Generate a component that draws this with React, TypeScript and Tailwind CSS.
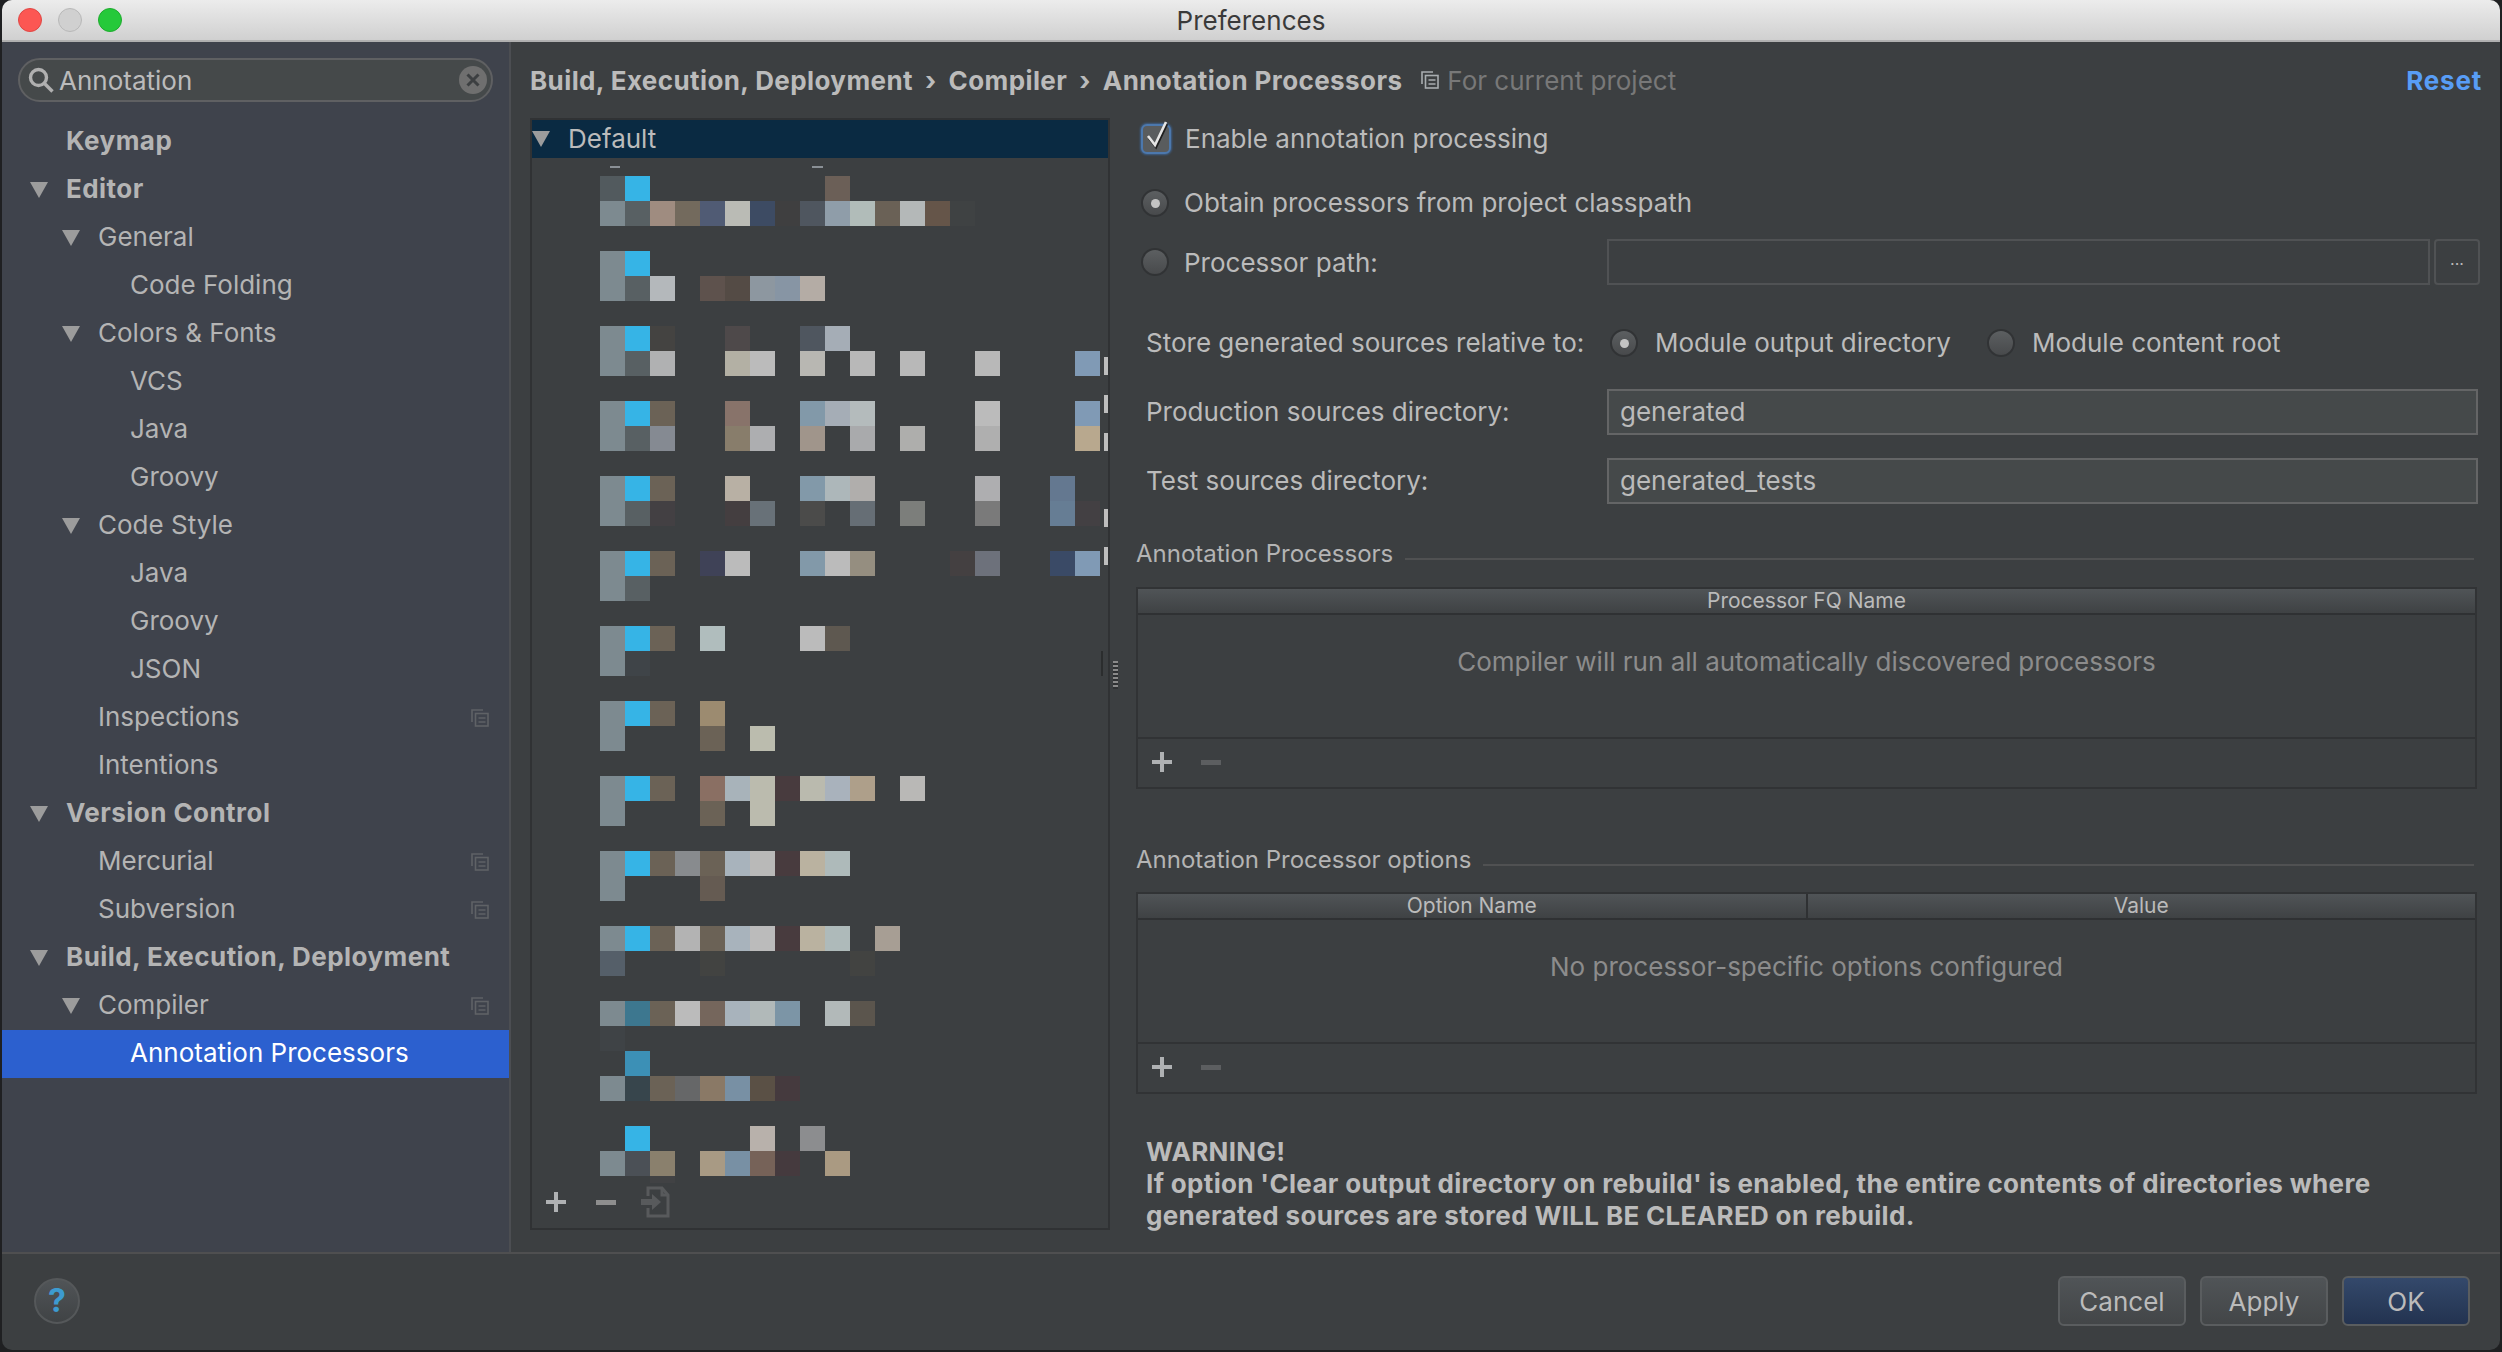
import React from "react";

const TREE = [
  { label: "Keymap", level: 0, bold: true },
  { label: "Editor", level: 0, bold: true, open: true },
  { label: "General", level: 1, open: true },
  { label: "Code Folding", level: 2 },
  { label: "Colors & Fonts", level: 1, open: true },
  { label: "VCS", level: 2 },
  { label: "Java", level: 2 },
  { label: "Groovy", level: 2 },
  { label: "Code Style", level: 1, open: true },
  { label: "Java", level: 2 },
  { label: "Groovy", level: 2 },
  { label: "JSON", level: 2 },
  { label: "Inspections", level: 1, copy: true },
  { label: "Intentions", level: 1 },
  { label: "Version Control", level: 0, bold: true, open: true },
  { label: "Mercurial", level: 1, copy: true },
  { label: "Subversion", level: 1, copy: true },
  { label: "Build, Execution, Deployment", level: 0, bold: true, open: true },
  { label: "Compiler", level: 1, open: true, copy: true },
  { label: "Annotation Processors", level: 2, selected: true },
];

const B = "#36b4e6";
const G = "#7d8a90";
const S = "#586063";
const M = "#6b6256";

// blurred-out module list: [row, column, colour]
const groups: [number, [number, string][], [number, string][]][] = [
  [0, [[0, "#525a5e"], [1, B], [9, "#6b5f57"]], [[0, G], [1, S], [2, "#9f8c80"], [3, "#736a5d"], [4, "#505b74"], [5, "#babbb5"], [6, "#3d4b63"], [7, "#3f3f40"], [8, "#4f565f"], [9, "#8f9da9"], [10, "#b1bcb9"], [11, "#6a6156"], [12, "#b4b8b8"], [13, "#655549"], [14, "#3f4243"]]],
  [3, [[0, G], [1, B]], [[0, G], [1, S], [2, "#b4b8bb"], [4, "#5e524d"], [5, "#544b45"], [6, "#8d97a0"], [7, "#8795a4"], [8, "#b4aca5"]]],
  [6, [[0, G], [1, B], [2, "#444341"], [5, "#4e494a"], [8, "#4f565f"], [9, "#a5adb6"]], [[0, G], [1, S], [2, "#b0b1b2"], [5, "#b3b0a4"], [6, "#bbbbbb"], [8, "#b8b7b2"], [10, "#b8b8b8"], [12, "#b8b8b8"], [15, "#b8b8b8"], [19, "#809ab5"]]],
  [9, [[0, G], [1, B], [2, M], [5, "#88736a"], [8, "#8299a9"], [9, "#a5adb6"], [10, "#b4bbbc"], [15, "#bbbbbb"], [19, "#809ab5"]], [[0, G], [1, S], [2, "#858a92"], [5, "#887d6b"], [6, "#adaeb0"], [8, "#a0958b"], [10, "#a9aaac"], [12, "#aeaeac"], [15, "#afafaf"], [19, "#b8a88e"]]],
  [12, [[0, G], [1, B], [2, M], [5, "#b8b0a4"], [8, "#8299a9"], [9, "#adb7ba"], [10, "#b0aeac"], [15, "#aeaeb0"], [18, "#647890"]], [[0, G], [1, S], [2, "#434043"], [5, "#443e40"], [6, "#687178"], [8, "#4b4b4a"], [10, "#666e75"], [12, "#7c7e7b"], [15, "#7a7a7a"], [18, "#667d94"], [19, "#434043"]]],
  [15, [[0, G], [1, B], [2, M], [4, "#3f4257"], [5, "#bbbbbb"], [8, "#8299a9"], [9, "#bbbbbb"], [10, "#958e80"], [14, "#444041"], [15, "#6d717b"], [18, "#3a4a66"], [19, "#809ab5"]], [[0, G], [1, S]]],
  [18, [[0, G], [1, B], [2, M], [4, "#b0bdbd"], [8, "#bbbbbb"], [9, "#5e5850"]], [[0, G], [1, "#3f4448"]]],
  [21, [[0, G], [1, B], [2, M], [4, "#9c8b70"]], [[0, G], [4, M], [6, "#bbbcae"]]],
  [24, [[0, G], [1, B], [2, M], [4, "#8a6f63"], [5, "#a8b3ba"], [6, "#bbbbae"], [7, "#483b3e"], [8, "#babaae"], [9, "#a9b2bc"], [10, "#ae9f8a"], [12, "#b9b8b6"]], [[0, G], [4, M], [6, "#bbbbae"]]],
  [27, [[0, G], [1, B], [2, M], [3, "#888b8e"], [4, M], [5, "#a8b3bc"], [6, "#b9b9b8"], [7, "#483b3e"], [8, "#bab2a0"], [9, "#aebaba"]], [[0, G], [4, "#655b52"]]],
  [30, [[0, G], [1, B], [2, M], [3, "#b3b3b3"], [4, M], [5, "#a8b3bc"], [6, "#bbbbbb"], [7, "#483b3e"], [8, "#bab2a0"], [9, "#aebaba"], [11, "#a79e94"]], [[0, "#555f69"], [4, "#424341"], [10, "#424341"]]],
  [33, [[0, G], [1, "#3d778f"], [2, M], [3, "#bbbbbb"], [4, "#75665c"], [5, "#a8b3bc"], [6, "#b1b9b9"], [7, "#7c95a6"], [9, "#b2b9b9"], [10, "#5b554d"]], [[0, "#3f4346"]]],
  [35, [[1, "#3c90b6"]], [[0, G], [1, "#37454c"], [2, M], [3, "#666768"], [4, "#8a7966"], [5, "#7890a4"], [6, "#5a5045"], [7, "#453a3e"]]],
  [38, [[1, B], [6, "#b8b1ab"], [8, "#8c8d8f"]], [[0, G], [1, "#4b5056"], [2, "#8a806d"], [4, "#a89a84"], [5, "#7890a4"], [6, "#766258"], [7, "#453a3e"], [9, "#aa9a82"]]],
];

// clipped letters that stick out at the right edge of the list
const edgeBits: [number, number][] = [
  [193, 18],
  [231, 18],
  [269, 18],
  [345, 18],
  [383, 18],
];

function Triangle() {
  return (
    <svg width="18" height="16" viewBox="0 0 18 16">
      <polygon points="0,0 18,0 9,16" fill="#9c9c9c" />
    </svg>
  );
}

function CopyIcon({ color = "#5f6266" }: { color?: string }) {
  return (
    <svg width="18" height="18" viewBox="0 0 18 18" fill="none" stroke={color} strokeWidth="1.6">
      <path d="M1 13V1h11" />
      <rect x="4.5" y="4.5" width="12.5" height="12.5" />
      <path d="M7.5 9h7M7.5 13h7" />
    </svg>
  );
}

function Plus({ color = "#afb1b3" }: { color?: string }) {
  return (
    <svg width="20" height="20" viewBox="0 0 20 20">
      <path d="M8 0h4v8h8v4h-8v8H8v-8H0V8h8z" fill={color} />
    </svg>
  );
}

function Minus({ color = "#8e8e8e" }: { color?: string }) {
  return <div className="w-[20px] h-[5px]" style={{ backgroundColor: color }} />;
}

function Radio({ on }: { on?: boolean }) {
  return (
    <div className="w-[28px] h-[28px] shrink-0 rounded-full border-2 border-[#313335] bg-gradient-to-b from-[#5c5f61] to-[#484a4c] flex items-center justify-center">
      {on && <div className="w-[9px] h-[9px] rounded-full bg-[#c4c4c4]" />}
    </div>
  );
}

function Field({ value, className }: { value?: string; className: string }) {
  return <div className={"h-[46px] border-2 flex items-center pl-[11px] pb-[1px] text-[#bbbbbb] " + className}>{value}</div>;
}

function Section({ title }: { title: string }) {
  return (
    <div className="h-[32px] flex items-center gap-[12px] text-[24px] text-[#b4b4b4]">
      <span>{title}</span>
      <div className="flex-1 h-[2px] bg-[#505152] mt-[10px] mr-[8px]" />
    </div>
  );
}

function Table({ columns, empty }: { columns: string[]; empty: string }) {
  return (
    <div className="w-[1341px] h-[202px] border-2 border-[#313335] flex flex-col">
      <div className="h-[26px] shrink-0 flex bg-gradient-to-b from-[#505457] to-[#3f4244] border-b-2 border-[#2f3133] text-[21px] text-[#bbbbbb] divide-x-2 divide-[#2f3133]">
        {columns.map((c) => (
          <div key={c} className="flex-1 flex items-center justify-center">
            {c}
          </div>
        ))}
      </div>
      <div className="flex-1 pt-[31px] text-center text-[#8c8c8c] leading-[32px] border-b-2 border-[#313335]">{empty}</div>
      <div className="h-[48px] shrink-0 flex items-center gap-[29px] pl-[14px] pb-[2px]">
        <Plus />
        <Minus color="#5c5e60" />
      </div>
    </div>
  );
}

function Btn({ label, primary }: { label: string; primary?: boolean }) {
  return (
    <div
      className={
        "w-[128px] h-[50px] rounded-[6px] border-2 border-[#5a5d5f] flex items-center justify-center text-[#bbbbbb] bg-gradient-to-b " +
        (primary ? "from-[#34496b] to-[#233350]" : "from-[#505457] to-[#434648]")
      }
    >
      {label}
    </div>
  );
}

export default function App() {
  return (
    <div className="w-[2502px] h-[1352px] bg-[#1f2022] pl-[2px] font-['Inter',sans-serif] text-[26px]">
      <div className="w-[2498px] h-[1350px] rounded-[10px] overflow-hidden flex flex-col bg-[#3c3f41]">
        {/* title bar */}
        <div className="relative h-[42px] shrink-0 bg-gradient-to-b from-[#ececec] to-[#d0d0d0] border-b-2 border-[#b0b0b0] flex items-center justify-center text-[#3a3a3a]">
          <div className="absolute left-[16px] top-[8px] flex gap-[16px]">
            <div className="w-[24px] h-[24px] rounded-full bg-[#fc5753] border border-[#df4744]" />
            <div className="w-[24px] h-[24px] rounded-full bg-[#d0d0d0] border border-[#b8b8b8]" />
            <div className="w-[24px] h-[24px] rounded-full bg-[#25c93a] border border-[#1eab2e]" />
          </div>
          Preferences
        </div>

        <div className="flex flex-1 min-h-0">
          {/* sidebar */}
          <div className="w-[509px] shrink-0 bg-[#3f434c] border-r-2 border-[#4c4e52] flex flex-col">
            <div className="mt-[16px] ml-[16px] w-[475px] h-[44px] rounded-full border-2 border-[#5f6062] bg-[#45494a] flex items-center pl-[8px] pr-[4px] text-[#bbbbbb]">
              <svg width="26" height="26" viewBox="0 0 26 26" fill="none" stroke="#b0b0b0" strokeWidth="3.4">
                <circle cx="10.5" cy="10.5" r="8" />
                <path d="M16.5 16.5l8 8" />
              </svg>
              <span className="ml-[5px] flex-1">Annotation</span>
              <div className="w-[28px] h-[28px] rounded-full bg-[#6f6f6f] flex items-center justify-center">
                <svg width="14" height="14" viewBox="0 0 14 14" stroke="#3c3f41" strokeWidth="3">
                  <path d="M1.5 1.5l11 11M12.5 1.5l-11 11" />
                </svg>
              </div>
            </div>
            <div className="mt-[16px]">
              {TREE.map((t, i) => (
                <div
                  key={i}
                  className={
                    "h-[48px] flex items-center " +
                    (t.selected ? "bg-[#2c60cf] text-white " : "text-[#b4b4b4] ") +
                    (t.level === 0 ? "pl-[28px]" : t.level === 1 ? "pl-[60px]" : "pl-[92px]")
                  }
                >
                  <div className="w-[36px] shrink-0">{t.open && <Triangle />}</div>
                  <span className={"flex-1 pb-[3px] " + (t.bold ? "font-bold tracking-[0.45px]" : "")}>{t.label}</span>
                  {t.copy && (
                    <div className="mr-[20px] flex">
                      <CopyIcon />
                    </div>
                  )}
                </div>
              ))}
            </div>
          </div>

          {/* content */}
          <div className="flex-1 min-w-0 pl-[19px] pr-[18px] text-[#bbbbbb]">
            <div className="h-[76px] flex items-center">
              <div className="font-bold tracking-[0.4px] flex">
                <span>Build, Execution, Deployment</span>
                <span className="mx-[12px]">›</span>
                <span>Compiler</span>
                <span className="mx-[12px]">›</span>
                <span>Annotation Processors</span>
              </div>
              <div className="ml-[19px] mr-[8px] flex">
                <CopyIcon color="#a8adb0" />
              </div>
              <span className="text-[#787878] flex-1">For current project</span>
              <span className="font-bold tracking-[0.8px] text-[#589df6]">Reset</span>
            </div>

            <div className="flex">
              {/* module tree */}
              <div className="relative w-[580px] h-[1112px] border-2 border-[#303234] shrink-0">
                <div className="h-[38px] bg-[#0a2a42] flex items-center pb-[1px]">
                  <div className="w-[36px] flex">
                    <Triangle />
                  </div>
                  Default
                </div>
                <svg width="576" height="1020" viewBox="0 0 576 1020" className="block mt-[6px]">
                  <rect x="78" y="2" width="10" height="2" fill="#8a9096" />
                  <rect x="280" y="2" width="11" height="2" fill="#8a9096" />
                  {groups.flatMap(([row, top, bottom]) => [
                    ...top.map(([k, c]) => <rect key={`${row}t${k}`} x={68 + k * 25} y={12 + row * 25} width="25" height="25" fill={c} />),
                    ...bottom.map(([k, c]) => <rect key={`${row}b${k}`} x={68 + k * 25} y={12 + (row + 1) * 25} width="25" height="25" fill={c} />),
                  ])}
                  <rect x="118" y="1012" width="25" height="7" fill="#414244" />
                  {edgeBits.map(([y, h]) => (
                    <rect key={y} x="572" y={y} width="4" height={h} fill="#bdbdbd" />
                  ))}
                  <rect x="569" y="487" width="2" height="25" fill="#2b2d2e" />
                </svg>
                <div className="absolute left-0 bottom-[10px] w-full flex items-center pl-[14px]">
                  <Plus />
                  <div className="ml-[30px]">
                    <Minus />
                  </div>
                  <svg className="ml-[25px]" width="29" height="32" viewBox="0 0 29 32" fill="none" stroke="#585a5c" strokeWidth="3">
                    <path d="M7 10V2h14l6 7v21H7v-8" />
                    <path d="M21 2v7h6" />
                    <path d="M0 13h11V8l9 8-9 8v-5H0z" fill="#585a5c" stroke="none" />
                  </svg>
                </div>
              </div>

              {/* drag handle */}
              <div className="w-[26px] shrink-0 flex items-center pl-[3px]">
                <div className="w-[5px] h-[28px] bg-[repeating-linear-gradient(to_bottom,#8a8a8a_0,#8a8a8a_2px,#2f3133_2px,#2f3133_4px)]" />
              </div>

              {/* settings */}
              <div className="flex-1 min-w-0">
                <div className="h-[42px] flex items-center pl-[5px]">
                  <div className="relative w-[30px] h-[30px] rounded-[6px] border-2 border-[#4c78ad] bg-[#595c5e] shadow-[0_0_2px_1px_#3f6088]">
                    <svg className="absolute left-[1px] top-[-5px]" width="26" height="32" viewBox="0 0 26 32" fill="none" strokeWidth="2.6">
                      <path d="M5 17l7 9L23 3" stroke="#1f1f1f" />
                      <path d="M4 15l7 9L22 1" stroke="#e4e4e4" />
                    </svg>
                  </div>
                  <span className="ml-[14px] pb-[1px]">Enable annotation processing</span>
                </div>
                <div className="h-[42px] mt-[22px] flex items-center pl-[5px] gap-[15px]">
                  <Radio on />
                  <span className="pb-[1px]">Obtain processors from project classpath</span>
                </div>
                <div className="h-[46px] mt-[15px] flex items-center">
                  <div className="w-[471px] pl-[5px] flex items-center gap-[15px]">
                    <Radio />
                    Processor path:
                  </div>
                  <Field className="w-[823px] border-[#505254]" />
                  <div className="ml-[4px] w-[46px] h-[46px] rounded-[4px] border-2 border-[#505254] flex items-center justify-center text-[16px] pb-[6px]">
                    ...
                  </div>
                </div>
                <div className="h-[42px] mt-[37px] flex items-center">
                  <div className="w-[474px] pl-[10px] pb-[1px]">Store generated sources relative to:</div>
                  <Radio on />
                  <span className="ml-[17px] w-[332px] pb-[1px]">Module output directory</span>
                  <Radio />
                  <span className="ml-[17px] pb-[1px]">Module content root</span>
                </div>
                <div className="mt-[25px] flex items-center">
                  <div className="w-[471px] pl-[10px] pb-[1px]">Production sources directory:</div>
                  <Field value="generated" className="w-[871px] bg-[#45494a] border-[#646566]" />
                </div>
                <div className="mt-[23px] flex items-center">
                  <div className="w-[471px] pl-[10px] pb-[1px]">Test sources directory:</div>
                  <Field value="generated_tests" className="w-[871px] bg-[#45494a] border-[#646566]" />
                </div>
                <div className="mt-[34px]">
                  <Section title="Annotation Processors" />
                </div>
                <div className="mt-[17px]">
                  <Table columns={["Processor FQ Name"]} empty="Compiler will run all automatically discovered processors" />
                </div>
                <div className="mt-[55px]">
                  <Section title="Annotation Processor options" />
                </div>
                <div className="mt-[16px]">
                  <Table columns={["Option Name", "Value"]} empty="No processor-specific options configured" />
                </div>
                <div className="mt-[42px] pl-[10px] font-bold tracking-[0.33px] leading-[32px]">
                  WARNING!
                  <br />
                  If option 'Clear output directory on rebuild' is enabled, the entire contents of directories where
                  <br />
                  generated sources are stored WILL BE CLEARED on rebuild.
                </div>
              </div>
            </div>
          </div>
        </div>

        {/* footer */}
        <div className="h-[98px] shrink-0 border-t-2 border-[#4f4f50] flex items-center pl-[32px] pr-[30px] pb-[2px] text-[#bbbbbb]">
          <div className="w-[46px] h-[46px] rounded-full border-2 border-[#55585a] bg-gradient-to-b from-[#505457] to-[#404345] flex items-center justify-center font-bold text-[32px] text-[#3d9bd0]">
            ?
          </div>
          <div className="ml-auto flex gap-[14px]">
            <Btn label="Cancel" />
            <Btn label="Apply" />
            <Btn label="OK" primary />
          </div>
        </div>
      </div>
    </div>
  );
}
